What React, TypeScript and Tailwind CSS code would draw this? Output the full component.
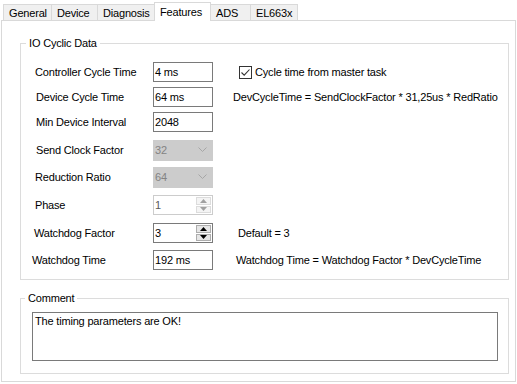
import React from "react";

const tabs = [
  { name: "General", w: "w-[49px]", pl: "pl-[5px]" },
  { name: "Device", w: "w-[47px]", pl: "pl-[5px]" },
  { name: "Diagnosis", w: "w-[58px]", pl: "pl-[5px]" },
  { name: "Features", w: "w-[57px]", pl: "pl-[5px]", active: true },
  { name: "ADS", w: "w-[41px]", pl: "pl-[5px]" },
  { name: "EL663x", w: "w-[48px]", pl: "pl-[5px]" },
];

function TextBox({ value }: { value: string }) {
  return (
    <div className="w-[60px] h-[20px] border border-[#7a7a7a] bg-white pl-[1px] flex items-center leading-[13px]">
      {value}
    </div>
  );
}

function Combo({ value }: { value: string }) {
  return (
    <div className="w-[60px] h-[21px] border border-[#cccccc] bg-[#cccccc] pl-[1px] flex items-center justify-between text-[#838383]">
      <span>{value}</span>
      <svg width="9" height="6" viewBox="0 0 9 6" className="mr-[5px]">
        <path d="M0.5 0.5 L4.5 4.5 L8.5 0.5" fill="none" stroke="#a6a6a6" strokeWidth="1" />
      </svg>
    </div>
  );
}

function Spinner({ value, disabled }: { value: string; disabled?: boolean }) {
  const border = disabled ? "border-[#cccccc]" : "border-[#7a7a7a]";
  const btn = disabled
    ? "bg-[#f4f4f4] border-[#dcdcdc]"
    : "bg-[#e6e6e6] border-[#adadad]";
  const arrow = disabled ? "#a0a0a0" : "#000000";
  return (
    <div className={`w-[60px] h-[20px] border ${border} bg-white flex`}>
      <div className={`flex-1 pl-[1px] flex items-center ${disabled ? "text-[#5a5a5a]" : ""}`}>{value}</div>
      <div className="w-[17px] flex flex-col p-[1px] gap-[1px]">
        <div className={`flex-1 border ${btn} flex items-center justify-center`}>
          <svg width="7" height="4" viewBox="0 0 7 4">
            <path d="M0 4 L3.5 0 L7 4 Z" fill={arrow} />
          </svg>
        </div>
        <div className={`flex-1 border ${btn} flex items-center justify-center`}>
          <svg width="7" height="4" viewBox="0 0 7 4">
            <path d="M0 0 L3.5 4 L7 0 Z" fill={arrow} />
          </svg>
        </div>
      </div>
    </div>
  );
}

function CheckBox() {
  return (
    <svg width="13" height="13" viewBox="0 0 13 13">
      <rect x="0.5" y="0.5" width="12" height="12" fill="#fff" stroke="#333333" />
      <path d="M2.5 6.5 L5.2 9.2 L10.5 3.5" fill="none" stroke="#333333" strokeWidth="1.1" />
    </svg>
  );
}

const rows = [
  {
    label: "Controller Cycle Time",
    pl: "pl-[14px]",
    mt: "mt-0",
    control: <TextBox value="4 ms" />,
    right: (
      <div className="ml-[26px] flex items-center gap-[3px]">
        <CheckBox />
        <span>Cycle time from master task</span>
      </div>
    ),
  },
  {
    label: "Device Cycle Time",
    pl: "pl-[15px]",
    mt: "mt-[5px]",
    control: <TextBox value="64 ms" />,
    right: <span className="ml-[20px]">DevCycleTime = SendClockFactor * 31,25us * RedRatio</span>,
  },
  {
    label: "Min Device Interval",
    pl: "pl-[15px]",
    mt: "mt-[5px]",
    control: <TextBox value="2048" />,
  },
  {
    label: "Send Clock Factor",
    pl: "pl-[15px]",
    mt: "mt-[8px]",
    control: <Combo value="32" />,
  },
  {
    label: "Reduction Ratio",
    pl: "pl-[14px]",
    mt: "mt-[7px]",
    control: <Combo value="64" />,
  },
  {
    label: "Phase",
    pl: "pl-[14px]",
    mt: "mt-[8px]",
    control: <Spinner value="1" disabled />,
  },
  {
    label: "Watchdog Factor",
    pl: "pl-[13px]",
    mt: "mt-[8px]",
    control: <Spinner value="3" />,
    right: <span className="ml-[25px]">Default = 3</span>,
  },
  {
    label: "Watchdog Time",
    pl: "pl-[11px]",
    mt: "mt-[7px]",
    control: <TextBox value="192 ms" />,
    right: <span className="ml-[23px]">Watchdog Time = Watchdog Factor * DevCycleTime</span>,
  },
];

export default function App() {
  return (
    <div className="w-[517px] h-[384px] bg-white text-black text-[11px] leading-[13px] tracking-[-0.18px] font-['Liberation_Sans',Arial,sans-serif] overflow-hidden">
      {/* tab strip */}
      <div className="h-[20px] pl-[3px] flex items-end">
        {tabs.map((t, i) =>
          t.active ? (
            <div
              key={t.name}
              className={`${t.w} ${i > 0 ? "-ml-[1px]" : ""} h-[19px] -mb-[1px] relative z-10 bg-white border-l border-r border-t border-[#d9d9d9] ${t.pl} pt-[3px]`}
            >
              {t.name}
            </div>
          ) : (
            <div
              key={t.name}
              className={`${t.w} ${i > 0 ? "-ml-[1px]" : ""} h-[16px] bg-[#f0f0f0] border-l border-r border-t border-[#d9d9d9] ${t.pl} pt-[2px]`}
            >
              {t.name}
            </div>
          )
        )}
      </div>

      {/* tab page */}
      <div className="ml-[1px] w-[515px] h-[362px] border border-[#d9d9d9] bg-white">
        <fieldset className="ml-[18px] mt-[16px] w-[489px] border border-[#dcdcdc] pt-[12px] pb-[9px]">
          <legend className="ml-[5px] px-[3px] leading-[13px]">IO Cyclic Data</legend>
          {rows.map((r) => (
            <div key={r.label} className={`${r.mt} h-[20px] flex items-center`}>
              <div className={`w-[132px] ${r.pl}`}>{r.label}</div>
              {r.control}
              {r.right}
            </div>
          ))}
        </fieldset>

        <fieldset className="ml-[18px] mt-[12px] w-[489px] border border-[#dcdcdc] pt-[7px] pb-[12px] px-0">
          <legend className="ml-[4px] px-[3px] leading-[13px]">Comment</legend>
          <div className="ml-[11px] w-[466px] h-[49px] border border-[#7a7a7a] bg-white pl-[2px] pt-[2px]">
            The timing parameters are OK!
          </div>
        </fieldset>
      </div>
    </div>
  );
}
